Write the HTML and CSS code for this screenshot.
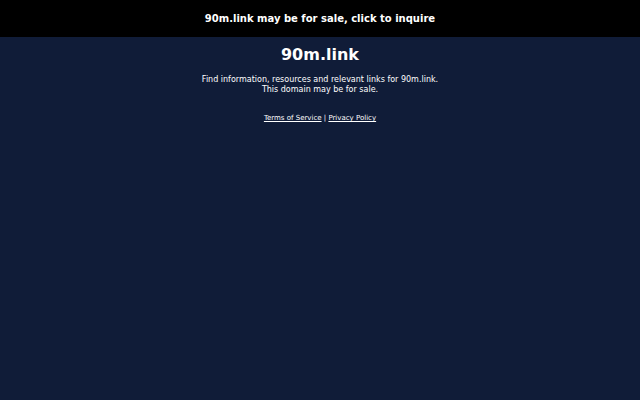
FILE: index.html
```html
<!DOCTYPE html>
<html>
<head>
<meta charset="utf-8">
<link rel="stylesheet" href="styles.css">
</head>
<body>
<div class="bar"><a href="#" class="bar-link">90m.link may be for sale, click to inquire</a></div>
<main class="content">
<h1 class="title">90m.link</h1>
<p class="desc">Find information, resources and relevant links for 90m.link.<br>This domain may be for sale.</p>
<p class="legal"><a href="#">Terms of Service</a> | <a href="#">Privacy Policy</a></p>
</main>
</body>
</html>
```
FILE: styles.css
```css
html, body { margin: 0; padding: 0; }
body {
  background: #101c38;
  color: #ffffff;
  font-family: "DejaVu Sans", sans-serif;
  width: 640px;
  height: 400px;
  overflow: hidden;
}
.bar {
  background: #000000;
  height: 37px;
  display: flex;
  align-items: center;
  justify-content: center;
}
.bar-link {
  color: #ffffff;
  text-decoration: none;
  font-weight: bold;
  font-size: 10px;
}
.content { text-align: center; }
.title {
  margin: 8px 0 0;
  font-size: 16px;
  line-height: 20px;
  font-weight: bold;
}
.desc {
  margin: 10px 0 0;
  font-size: 8px;
  line-height: 10px;
}
.legal {
  margin: 19px 0 0;
  font-size: 7px;
  line-height: 9px;
}
.legal a { color: #ffffff; }
```
